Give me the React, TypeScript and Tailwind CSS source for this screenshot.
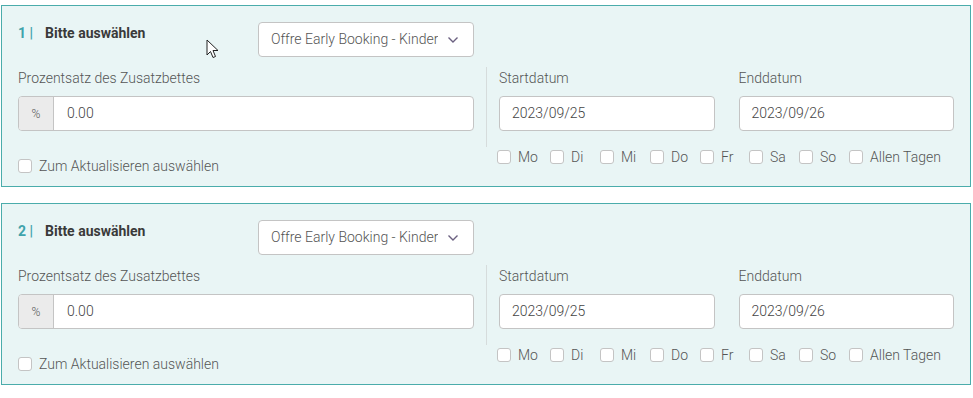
import React from "react";

const days = [
  { l: "Mo", w: "w-[53px]" },
  { l: "Di", w: "w-[50px]" },
  { l: "Mi", w: "w-[50px]" },
  { l: "Do", w: "w-[50px]" },
  { l: "Fr", w: "w-[49px]" },
  { l: "Sa", w: "w-[50px]" },
  { l: "So", w: "w-[50px]" },
  { l: "Allen Tagen", w: "" },
];

function Box() {
  return <span className="inline-block w-[14px] h-[14px] shrink-0 rounded-[3px] border border-[#c4c4c4] bg-white" />;
}

function Card({ n }: { n: number }) {
  return (
    <div className="w-[970px] border border-[#4aacab] bg-[#e9f5f5] pt-4 pb-[10px] px-4">
      <div className="grid grid-cols-2 w-[936px]">
        <div className="pr-3">
          <div className="flex h-[35px]">
            <div className="w-[240px] flex items-start pt-[1px] text-[14px] leading-[20px] font-bold">
              <span className="text-[#3fa3ab] w-[27px]">{n} |</span>
              <span className="text-[#3a3a3a]">Bitte auswählen</span>
            </div>
            <div className="w-[216px] h-[35px] rounded-[4px] border border-[#c4c4c4] bg-white flex items-center pl-3 pr-[14px] text-[14px] font-light text-[#555]">
              <span className="w-[167px] whitespace-nowrap overflow-hidden">Offre Early Booking - Kinder</span>
              <svg width="12" height="8" viewBox="0 0 12 8" className="ml-auto">
                <path d="M1.5 1.5 L6 6 L10.5 1.5" fill="none" stroke="#6b6080" strokeWidth="1.4" />
              </svg>
            </div>
          </div>
          <div className="mt-[11px] text-[14px] leading-[20px] font-light text-[#555]">Prozentsatz des Zusatzbettes</div>
          <div className="mt-2 flex h-[35px] rounded-[4px] border border-[#c4c4c4] bg-white overflow-hidden">
            <div className="w-[35px] bg-[#ebebeb] border-r border-[#c4c4c4] flex items-center justify-center text-[12px] font-light text-[#555]">%</div>
            <div className="flex items-center pl-[13px] text-[14px] font-light text-[#444]">0.00</div>
          </div>
          <label className="mt-[25px] flex items-center gap-[7px] h-[20px] text-[14px] font-light text-[#555]">
            <Box />
            <span>Zum Aktualisieren auswählen</span>
          </label>
        </div>
        <div className="pt-[45px]">
          <div className="border-l border-[#d6dcdc] pl-3 pt-px pb-4 grid grid-cols-2 gap-x-6">
            <div>
              <div className="text-[14px] leading-[20px] font-light text-[#555]">Startdatum</div>
              <div className="mt-2 h-[35px] rounded-[4px] border border-[#c4c4c4] bg-white flex items-center pl-3 text-[14px] font-light text-[#444]">2023/09/25</div>
            </div>
            <div>
              <div className="text-[14px] leading-[20px] font-light text-[#555]">Enddatum</div>
              <div className="mt-2 h-[35px] rounded-[4px] border border-[#c4c4c4] bg-white flex items-center pl-3 text-[14px] font-light text-[#444]">2023/09/26</div>
            </div>
          </div>
          <div className="flex items-center h-[20px] pl-[11px] text-[14px] font-light text-[#555]">
            {days.map((d) => (
              <label key={d.l} className={`flex items-center gap-[7px] ${d.w}`}>
                <Box />
                <span>{d.l}</span>
              </label>
            ))}
          </div>
        </div>
      </div>
    </div>
  );
}

export default function App() {
  return (
    <div className="relative w-[973px] h-[398px] bg-white pl-px pt-[5px] font-['Roboto',sans-serif]">
      <div className="flex flex-col gap-4">
        <Card n={1} />
        <Card n={2} />
      </div>
      <svg className="absolute left-[206px] top-[39px]" width="14" height="21" viewBox="0 0 14 21">
        <path d="M1 1 L1 16 L4.5 12.5 L7 18.5 L9.5 17.5 L7 11.5 L12 11.5 Z" fill="white" stroke="#222" strokeWidth="1" strokeLinejoin="round" />
      </svg>
    </div>
  );
}
